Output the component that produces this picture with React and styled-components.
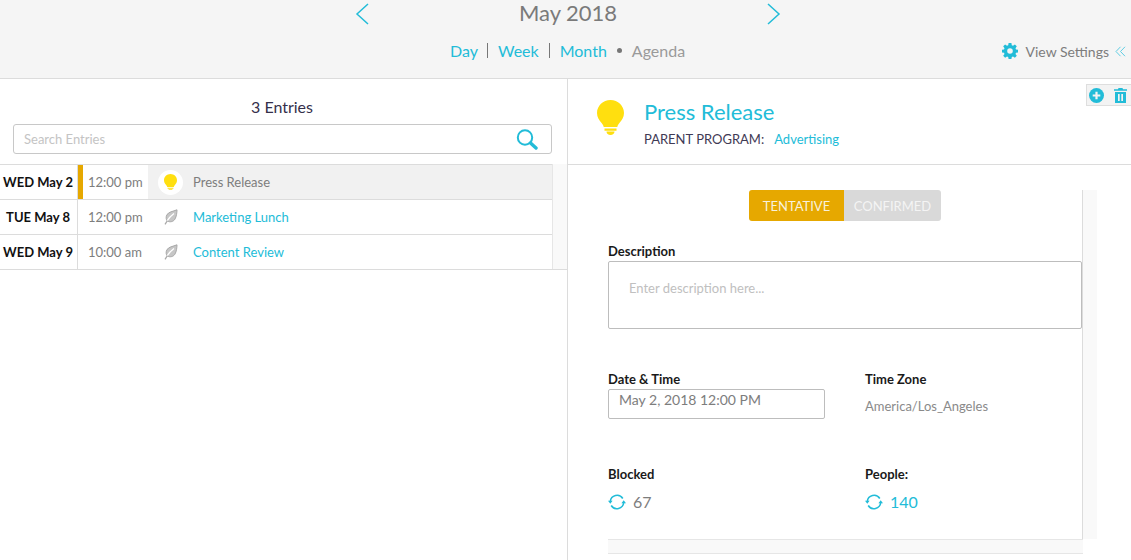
import React from "react";
import styled, { createGlobalStyle } from "styled-components";

const teal = "#22bcd8";

const Global = createGlobalStyle`
  html, body { margin: 0; padding: 0; background: #fff; }
  body { font-family: Lato, "Open Sans", sans-serif; overflow: hidden; }
  * { box-sizing: border-box; }
`;

const Page = styled.div`width: 1131px; height: 560px; display: flex; flex-direction: column; overflow: hidden; position: relative;`;

const Header = styled.header`height: 79px; flex: none; background: #f5f5f5; border-bottom: 1px solid #dcdcdc; display: flex; flex-direction: column;`;
const TitleRow = styled.div`height: 27px; width: 426px; margin-left: 355px; display: flex; align-items: center; justify-content: space-between;`;
const Title = styled.div`font-size: 22px; color: #7a7a7a; line-height: 25px; margin-bottom: 2px;`;
const NavRow = styled.div`margin-top: 11px; display: grid; grid-template-columns: 450px auto 1fr; align-items: center; height: 26px;`;
const Tabs = styled.nav`grid-column: 2; display: flex; align-items: center; font-size: 16px; line-height: 20px; margin-bottom: 1px;`;
const Tab = styled.span`color: ${p => (p.$active ? "#9a9a9a" : teal)};`;
const Divider = styled.span`width: 1px; height: 15px; background: #777; margin: 0 10px 0 ${p => p.$before}px;`;
const Dot = styled.span`width: 5px; height: 5px; border-radius: 50%; background: #777; margin: 0 10px 0 10px;`;
const Settings = styled.div`grid-column: 3; justify-self: end; display: flex; align-items: center; margin-right: 5px; font-size: 14px; color: #7d7d7d;`;
const SettingsLabel = styled.span`margin: 0 6px 0 7px;`;

const Main = styled.main`flex: 1; display: flex; min-height: 0;`;
const Left = styled.section`width: 568px; flex: none; border-right: 1px solid #dcdcdc; display: flex; flex-direction: column;`;
const EntriesTitle = styled.div`margin-top: 18px; height: 20px; line-height: 20px; text-align: center; font-size: 16px; color: #35304a; padding-right: 3px;`;
const SearchBox = styled.div`margin: 7px 15px 0 13px; height: 30px; border: 1px solid #c8c8c8; border-radius: 3px; display: flex; align-items: center; justify-content: space-between; padding: 0 13px 0 10px;`;
const SearchHint = styled.span`font-size: 13px; color: #c4c4c4;`;
const TableWrap = styled.div`margin-top: 10px; display: grid; grid-template-columns: 552px 15px; border-bottom: 1px solid #dcdcdc;`;
const Table = styled.div`border-top: 1px solid #dcdcdc;`;
const Track = styled.div`background: #f9f9f9; border-left: 1px solid #e6e6e6;`;
const Row = styled.div`height: 35px; display: grid; grid-template-columns: 78px 70px 1fr; border-bottom: 1px solid #dcdcdc; &:last-child { border-bottom: 0; height: 34px; }`;
const DateCell = styled.div`border-right: 1px solid #dcdcdc; font-size: 13px; font-weight: 700; color: #111; display: flex; align-items: center; justify-content: center; white-space: nowrap; padding-right: 1px;`;
const TimeCell = styled.div`font-size: 13px; color: #7d7d7d; display: flex; align-items: center; padding-left: ${p => (p.$marked ? "5px" : "10px")}; border-left: ${p => (p.$marked ? "5px solid #e6a800" : "0")};`;
const NameCell = styled.div`display: flex; align-items: center; font-size: 13px; background: ${p => (p.$active ? "#f1f1f1" : "#fff")}; color: ${p => (p.$active ? "#7d7d7d" : teal)};`;
const IconSlot = styled.div`width: 25px; height: 25px; margin: 0 10px 0 10px; border-radius: 50%; background: ${p => (p.$active ? "#fff" : "transparent")}; display: flex; align-items: center; justify-content: center;`;

const Right = styled.section`flex: 1; min-width: 0; display: flex; flex-direction: column;`;
const Detail = styled.div`height: 86px; flex: none; border-bottom: 1px solid #dcdcdc; display: flex; padding: 21px 0 0 29px;`;
const DetailText = styled.div`margin-left: 20px; margin-top: -2px;`;
const DetailTitle = styled.div`font-size: 22px; line-height: 28px; color: ${teal};`;
const Parent = styled.div`margin-top: 5px; font-size: 13px; line-height: 16px; color: #3f3a55; display: flex;`;
const ParentLink = styled.span`color: ${teal}; margin-left: 10px;`;
const Actions = styled.div`position: absolute; top: 84px; right: 0; width: 45px; height: 22px; background: #f3f3f3; border: 1px solid #dedede; border-right: 0; display: flex; align-items: center; gap: 10px; padding-left: 2px;`;

const Scroller = styled.div`margin: 25px 34px 0 40px; display: grid; grid-template-columns: 475px 14px; grid-template-rows: 349px 15px;`;
const Content = styled.div`border-right: 1px solid #dcdcdc; display: flex; flex-direction: column;`;
const VTrack = styled.div`background: #f9f9f9;`;
const HTrack = styled.div`background: #f9f9f9; border-top: 1px solid #e6e6e6; border-bottom: 1px solid #e6e6e6;`;
const Toggle = styled.div`display: flex; align-self: center; height: 31px;`;
const ToggleBtn = styled.div`height: 31px; display: flex; align-items: center; justify-content: center; font-size: 13px; color: ${p => (p.$on ? "#f8f1dc" : "#f4f4f4")}; background: ${p => (p.$on ? "#e6a800" : "#d9d9d9")}; width: ${p => p.$w}px; border-radius: ${p => (p.$on ? "3px 0 0 3px" : "0 3px 3px 0")};`;
const FieldLabel = styled.div`font-size: 13px; line-height: 16px; font-weight: 700; color: #1a1a1a;`;
const DescLabel = styled(FieldLabel)`margin-top: 22px;`;
const TextBox = styled.div`margin-top: 2px; width: 474px; height: 68px; border: 1px solid #bdbdbd; border-radius: 2px; padding: 18px 20px; font-size: 13px; line-height: 16px; color: #c0c0c0;`;
const Columns = styled.div`display: grid; grid-template-columns: 257px 1fr;`;
const DateRow = styled(Columns)`margin-top: 42px;`;
const StatsRow = styled(Columns)`margin-top: 47px;`;
const DateInput = styled.div`margin-top: 2px; width: 217px; height: 30px; border: 1px solid #bdbdbd; border-radius: 2px; padding: 1px 10px; font-size: 14px; line-height: 18px; color: #7d7d7d;`;
const Zone = styled.div`margin-top: 11px; font-size: 13px; line-height: 16px; color: #8a8a8a;`;
const Stat = styled.div`margin-top: 10px; display: flex; align-items: center; gap: 7px; font-size: 16px; line-height: 20px; color: ${p => (p.$link ? teal : "#7d7d7d")};`;

const Chevron = ({ left }) => (
  <svg width="14" height="22" viewBox="0 0 14 22" fill="none" stroke={teal} strokeWidth="1.5">
    <path d={left ? "M13 1 L2 11 L13 21" : "M1 1 L12 11 L1 21"} />
  </svg>
);
const Gear = () => (
  <svg width="16" height="16" viewBox="0 0 16 16">
    <path fill={teal} fillRule="evenodd" d="M6.6 0h2.8l.4 2.2 1.2.5L12.9 1.4 14.8 3.3l-1.3 1.9.5 1.2 2 .3v2.700l-2 .4-.5 1.200 1.300 1.800-1.900 2-1.900-1.300-1.200.5-.4 2.100H6.600l-.4-2.100-1.200-.5-1.900 1.300-1.900-2 1.300-1.800-.5-1.200-2-.4V6.700l2-.3.5-1.200L1.200 3.300 3.100 1.400 5 2.700l1.200-.5zM8 5.200a2.800 2.800 0 1 0 0 5.600 2.800 2.800 0 0 0 0-5.600z" />
  </svg>
);
const DoubleChevron = () => (
  <svg width="11" height="11" viewBox="0 0 11 11" fill="none" stroke="#5fcde3" strokeWidth="1">
    <path d="M5.500 .8 L1 5.500 L5.500 10.200 M10 .8 L5.500 5.500 L10 10.200" />
  </svg>
);
const Search = () => (
  <svg width="22" height="21" viewBox="0 0 22 21" fill="none">
    <circle cx="9" cy="8.500" r="7.200" stroke={teal} strokeWidth="2" />
    <path d="M14.500 14 L20 19" stroke={teal} strokeWidth="3.400" strokeLinecap="round" />
  </svg>
);
const Bulb = ({ size }) => (
  <svg width={size} height={size * 35 / 27} viewBox="0 0 27 35">
    <path fill="#ffdf0f" d="M13.500 0C6 0 0 5.800 0 13c0 4.400 2.200 7.300 4.400 9.800 1 1.200 2 2.600 2.300 4.200h13.600c.3-1.600 1.300-3 2.300-4.200C24.800 20.300 27 17.400 27 13 27 5.800 21 0 13.500 0z" />
    <path fill="#ffdf0f" d="M7.500 28.500h12v2.200h-12zM9.500 31.500h8c0 2-1.700 3.500-4 3.500s-4-1.500-4-3.500z" />
  </svg>
);
const Leaf = () => (
  <svg width="14" height="16" viewBox="0 0 14 16">
    <path fill="#c6c6c6" stroke="#a8a8a8" strokeWidth="1" d="M13 .8C9 2.500 4.500 2.700 2.800 6 1.600 8.400 2.200 10.600 3.200 12c2.600 1.400 6 .9 7.700-1.800C12.500 7.500 12.900 4 13 .8z" />
    <path fill="none" stroke="#ffffff" strokeWidth="1.300" d="M10 4.500C7.300 6.500 4.800 9 3 12" />
    <path fill="none" stroke="#a8a8a8" strokeWidth="1.200" d="M3.400 11.600 1 15.300" />
  </svg>
);
const Plus = () => (
  <svg width="15" height="15" viewBox="0 0 15 15">
    <circle cx="7.500" cy="7.500" r="7.500" fill={teal} />
    <path d="M7.500 3.700v7.600M3.700 7.500h7.600" stroke="#f3f3f3" strokeWidth="2.200" />
  </svg>
);
const Trash = () => (
  <svg width="13" height="15" viewBox="0 0 13 15">
    <path fill={teal} fillRule="evenodd" d="M4.500 0h4l.5 1.200h4v1.600H0V1.200h4zM1 4h11v11H1zM4 6v7h1.700V6zm3.300 0v7H9V6z" />
  </svg>
);
const Sync = () => (
  <svg width="18" height="16" viewBox="0 0 18 16" fill="none">
    <path d="M2.300 7.500A6.800 6.800 0 0 1 14.800 4.500" stroke={teal} strokeWidth="1.600" />
    <path d="M15.700 8.500A6.800 6.800 0 0 1 3.200 11.500" stroke={teal} strokeWidth="1.600" />
    <path fill={teal} d="M0 6.800h4.600L2.300 9.800zM18 9.200h-4.600L15.700 6.200z" />
  </svg>
);

const entries = [
  { date: "WED May 2", time: "12:00 pm", name: "Press Release", active: true },
  { date: "TUE May 8", time: "12:00 pm", name: "Marketing Lunch" },
  { date: "WED May 9", time: "10:00 am", name: "Content Review" },
];

export default function App() {
  return (
    <Page>
      <Global />
      <Header>
        <TitleRow>
          <Chevron left />
          <Title>May 2018</Title>
          <Chevron />
        </TitleRow>
        <NavRow>
          <Tabs>
            <Tab>Day</Tab>
            <Divider $before={9} />
            <Tab>Week</Tab>
            <Divider $before={10} />
            <Tab>Month</Tab>
            <Dot />
            <Tab $active>Agenda</Tab>
          </Tabs>
          <Settings>
            <Gear />
            <SettingsLabel>View Settings</SettingsLabel>
            <DoubleChevron />
          </Settings>
        </NavRow>
      </Header>
      <Main>
        <Left>
          <EntriesTitle>3 Entries</EntriesTitle>
          <SearchBox>
            <SearchHint>Search Entries</SearchHint>
            <Search />
          </SearchBox>
          <TableWrap>
            <Table>
              {entries.map(e => (
                <Row key={e.date}>
                  <DateCell>{e.date}</DateCell>
                  <TimeCell $marked={e.active}>{e.time}</TimeCell>
                  <NameCell $active={e.active}>
                    <IconSlot $active={e.active}>
                      {e.active ? <Bulb size={13} /> : <Leaf />}
                    </IconSlot>
                    {e.name}
                  </NameCell>
                </Row>
              ))}
            </Table>
            <Track />
          </TableWrap>
        </Left>
        <Right>
          <Detail>
            <Bulb size={27} />
            <DetailText>
              <DetailTitle>Press Release</DetailTitle>
              <Parent>
                PARENT PROGRAM:
                <ParentLink>Advertising</ParentLink>
              </Parent>
            </DetailText>
          </Detail>
          <Actions>
            <Plus />
            <Trash />
          </Actions>
          <Scroller>
            <Content>
              <Toggle>
                <ToggleBtn $on $w={95}>TENTATIVE</ToggleBtn>
                <ToggleBtn $w={97}>CONFIRMED</ToggleBtn>
              </Toggle>
              <DescLabel>Description</DescLabel>
              <TextBox>Enter description here...</TextBox>
              <DateRow>
                <div>
                  <FieldLabel>Date &amp; Time</FieldLabel>
                  <DateInput>May 2, 2018 12:00 PM</DateInput>
                </div>
                <div>
                  <FieldLabel>Time Zone</FieldLabel>
                  <Zone>America/Los_Angeles</Zone>
                </div>
              </DateRow>
              <StatsRow>
                <div>
                  <FieldLabel>Blocked</FieldLabel>
                  <Stat><Sync />67</Stat>
                </div>
                <div>
                  <FieldLabel>People:</FieldLabel>
                  <Stat $link><Sync />140</Stat>
                </div>
              </StatsRow>
            </Content>
            <VTrack />
            <HTrack />
          </Scroller>
        </Right>
      </Main>
    </Page>
  );
}
